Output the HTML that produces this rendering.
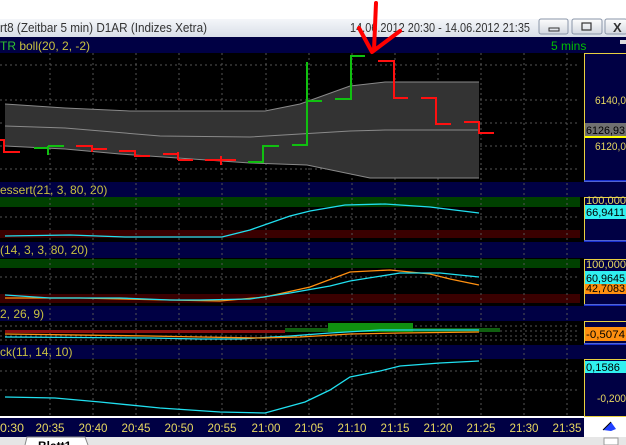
<!DOCTYPE html>
<html><head><meta charset="utf-8"><style>
html,body{margin:0;padding:0;background:#fff;overflow:hidden}
svg{display:block}
text{font-family:"Liberation Sans",sans-serif}
</style></head><body>
<svg width="626" height="445" viewBox="0 0 626 445" xmlns="http://www.w3.org/2000/svg">
<defs>
<linearGradient id="tb" x1="0" y1="0" x2="0" y2="1"><stop offset="0" stop-color="#f4f6fa"/><stop offset="1" stop-color="#d9dfe8"/></linearGradient>
<linearGradient id="bt" x1="0" y1="0" x2="0" y2="1"><stop offset="0" stop-color="#fdfdfd"/><stop offset="1" stop-color="#d3d8e0"/></linearGradient>
</defs>
<rect width="626" height="445" fill="#000"/>
<rect width="626" height="19" fill="#fff"/>
<rect y="19" width="626" height="18" fill="url(#tb)"/>
<text x="0" y="32" font-size="12.5" fill="#333" textLength="207" lengthAdjust="spacingAndGlyphs">rt8 (Zeitbar 5 min)  D1AR (Indizes Xetra)</text>
<text x="350" y="32" font-size="12.5" fill="#333" textLength="180" lengthAdjust="spacingAndGlyphs">14.06.2012 20:30 - 14.06.2012 21:35</text>
<rect x="539" y="19" width="29" height="15" rx="2" fill="url(#bt)" stroke="#8a96a8"/>
<rect x="549" y="28" width="10" height="3" fill="none" stroke="#333"/>
<rect x="572" y="19" width="30" height="15" rx="2" fill="url(#bt)" stroke="#8a96a8"/>
<rect x="582" y="23" width="9" height="7" fill="none" stroke="#333" stroke-width="1.2"/>
<rect x="605" y="19" width="22" height="15" rx="2" fill="url(#bt)" stroke="#8a96a8"/>
<text x="613" y="32" font-size="13" font-weight="bold" fill="#333">X</text>
<rect y="37" width="626" height="16" fill="#000044"/>
<text x="0" y="50" font-size="12" fill="#c8c040"><tspan fill="#30c030">TR</tspan> boll(20, 2, -2)</text>
<text x="551" y="50" font-size="12" fill="#00c000">5 mins</text>
<rect x="620" y="40" width="6" height="4" fill="#ddd"/>
<rect y="182" width="626" height="15" fill="#000044"/>
<text x="0" y="194" font-size="12" fill="#c8c040">essert(21, 3, 80, 20)</text>
<rect y="242" width="626" height="16" fill="#000044"/>
<text x="0" y="254" font-size="12" fill="#c8c040">(14, 3, 3, 80, 20)</text>
<rect y="306" width="626" height="15" fill="#000044"/>
<text x="0" y="318" font-size="12" fill="#c8c040">2, 26, 9)</text>
<rect y="345" width="626" height="14" fill="#000044"/>
<text x="0" y="356" font-size="12" fill="#c8c040">ck(11, 14, 10)</text>
<rect y="197" width="580" height="10" fill="#004000"/>
<rect y="230" width="580" height="8" fill="#3a0000"/>
<rect y="259" width="580" height="9" fill="#004000"/>
<rect y="294" width="580" height="9" fill="#3a0000"/>
<g stroke="#555" stroke-dasharray="2,3" stroke-width="1">
<path d="M50 53V417M93 53V417M136 53V417M179 53V417M222 53V417M266 53V417M309 53V417M352 53V417M395 53V417M438 53V417M481 53V417M524 53V417M567 53V417"/>
<path d="M0 65H580M0 100H580M0 123H580M0 146H580M0 169H580M0 217H580M0 277H580M0 326H580M0 331H580M0 336H580M0 340H580M0 371H580M0 390H580"/>
</g>
<path d="M5 104L65 108L130 111L265 111L300 104L350 86L385 82L479 82L479 178L370 178L307 165L250 163L120 154L65 149L5 146Z" fill="#333"/>
<g fill="none" stroke="#8a8a8a" stroke-width="1">
<path d="M5 104L65 108L130 111L265 111L300 104L350 86L385 82L479 82"/>
<path d="M5 146L65 149L120 154L250 163L307 165L370 178L479 178"/>
<path d="M5 126L65 128L160 136L250 137L300 134L350 131L385 130L479 130"/>
</g>
<g fill="none" stroke-width="2">
<g stroke="#ff1010">
<path d="M0 140H4V152H20"/>
<path d="M76 146H92V152M92 149H107"/>
<path d="M119 151H135V157M135 156H150"/>
<path d="M163 154H178M178 152V160M178 160H193"/>
<path d="M205 160H236M221 156V165"/>
<path d="M378 61H394V98H408"/>
<path d="M421 98H436V124H451"/>
<path d="M464 122H479V133H494"/>
</g>
<g stroke="#10c010">
<path d="M34 148H48M48 146V155M48 146H64"/>
<path d="M248 162H263V146H279"/>
<path d="M292 145H307V62M307 101H322"/>
<path d="M335 99H351V56H365"/>
</g>
</g>
<path d="M376 3L374 50M359 28L372 52L400 31" fill="none" stroke="#ff0000" stroke-width="4" stroke-linecap="round" stroke-linejoin="round"/>
<g fill="none" stroke-width="1.3">
<path stroke="#20e0f0" d="M5 236L70 235L125 237L222 237L250 230L290 216L310 211L345 205L385 204L430 207L479 213"/>
<path stroke="#ff9010" d="M5 298L80 298L170 300L220 301L265 297L310 287L350 272L390 270L430 274L450 279L479 285"/>
<path stroke="#20e0f0" d="M5 295L50 298L120 298L170 300L200 300L250 299L290 293L330 286L350 281L400 273L440 273L479 277"/>
<path stroke="#20e0f0" d="M5 397L55 398L100 402L160 408L220 412L265 413L305 402L330 390L350 377L380 371L400 366L440 363L479 361"/>
</g>
<rect x="5" y="330" width="280" height="3" fill="#8a1010"/>
<rect x="285" y="328" width="215" height="4" fill="#106010"/>
<rect x="328" y="323" width="85" height="9" fill="#109010"/>
<path d="M5 337L150 338L200 339L240 339L290 336L330 333L380 330L479 330" stroke="#20e0f0" fill="none" stroke-width="1.3"/>
<path d="M5 334L150 336L200 337L260 338L300 337L350 334L400 333L479 332" stroke="#ff9010" fill="none" stroke-width="1.3"/>
<rect x="584" y="53" width="42" height="364" fill="#000044"/>
<g fill="#000044" stroke="#e8d040" stroke-width="1">
<rect x="584.5" y="53.5" width="45" height="128"/>
<rect x="584.5" y="197.5" width="45" height="43"/>
<rect x="584.5" y="259.5" width="45" height="45"/>
<rect x="584.5" y="321.5" width="45" height="22"/>
<rect x="584.5" y="359.5" width="45" height="57"/>
</g>
<g stroke="#2040ff" stroke-width="1.5"><path d="M584 181H626M584 241H626M584 305H626M584 344H626"/></g>
<g font-size="11" lengthAdjust="spacingAndGlyphs">
<text x="595" y="104" fill="#e8d860" textLength="31" lengthAdjust="spacingAndGlyphs">6140,0</text>
<rect x="585" y="123" width="41" height="14" fill="#707070"/>
<rect x="585" y="136" width="41" height="2" fill="#ffff00"/>
<text x="586" y="134" fill="#000" textLength="39" lengthAdjust="spacingAndGlyphs">6126,93</text>
<text x="595" y="150" fill="#e8d860" textLength="31" lengthAdjust="spacingAndGlyphs">6120,0</text>
<text x="586" y="204" fill="#e8d860" textLength="40" lengthAdjust="spacingAndGlyphs">100,000</text>
<rect x="585" y="205" width="41" height="14" fill="#30f0f0"/>
<text x="586" y="216" fill="#000" textLength="39" lengthAdjust="spacingAndGlyphs">66,9411</text>
<text x="586" y="268" fill="#e8d860" textLength="40" lengthAdjust="spacingAndGlyphs">100,000</text>
<rect x="585" y="284" width="41" height="10" fill="#ff9010"/>
<text x="586" y="292" fill="#000" textLength="39" lengthAdjust="spacingAndGlyphs">42,7083</text>
<rect x="585" y="271" width="41" height="13" fill="#30f0f0"/>
<text x="586" y="282" fill="#000" textLength="39" lengthAdjust="spacingAndGlyphs">60,9645</text>
<rect x="585" y="327" width="41" height="14" fill="#ff9010"/>
<text x="586" y="338" fill="#000" textLength="39" lengthAdjust="spacingAndGlyphs">-0,5074</text>
<rect x="585" y="361" width="41" height="12" fill="#30f0f0"/>
<text x="586" y="371" fill="#000" textLength="34" lengthAdjust="spacingAndGlyphs">0,1586</text>
<text x="597" y="402" fill="#e8d860" textLength="29" lengthAdjust="spacingAndGlyphs">-0,200</text>
</g>
<rect y="416" width="584" height="2" fill="#fff"/>
<rect y="418" width="584" height="19" fill="#000044"/>
<g font-size="12" fill="#e8d860">
<text x="0" y="432" textLength="24" lengthAdjust="spacingAndGlyphs">0:30</text>
<text x="35.5" y="432" textLength="29" lengthAdjust="spacingAndGlyphs">20:35</text><text x="78.5" y="432" textLength="29" lengthAdjust="spacingAndGlyphs">20:40</text><text x="121.5" y="432" textLength="29" lengthAdjust="spacingAndGlyphs">20:45</text><text x="164.5" y="432" textLength="29" lengthAdjust="spacingAndGlyphs">20:50</text><text x="207.5" y="432" textLength="29" lengthAdjust="spacingAndGlyphs">20:55</text><text x="251.5" y="432" textLength="29" lengthAdjust="spacingAndGlyphs">21:00</text><text x="294.5" y="432" textLength="29" lengthAdjust="spacingAndGlyphs">21:05</text><text x="337.5" y="432" textLength="29" lengthAdjust="spacingAndGlyphs">21:10</text><text x="380.5" y="432" textLength="29" lengthAdjust="spacingAndGlyphs">21:15</text><text x="423.5" y="432" textLength="29" lengthAdjust="spacingAndGlyphs">21:20</text><text x="466.5" y="432" textLength="29" lengthAdjust="spacingAndGlyphs">21:25</text><text x="509.5" y="432" textLength="29" lengthAdjust="spacingAndGlyphs">21:30</text><text x="552.5" y="432" textLength="29" lengthAdjust="spacingAndGlyphs">21:35</text>
</g>
<rect x="584" y="417" width="42" height="20" fill="#fff"/>
<path d="M603 430L611 422L616 429L611 431Z" fill="#2040ff"/>
<path d="M603 430L611 422" stroke="#000" stroke-width="1"/>
<rect y="437" width="626" height="8" fill="#e6e6e6"/>
<path d="M25 445L27 437H85L88 445" fill="#fff" stroke="#888"/>
<text x="38" y="450" font-size="12" font-weight="bold" fill="#000">Blatt1</text>
<rect x="604" y="438" width="14" height="7" fill="#fff" stroke="#999"/>
</svg>
</body></html>
